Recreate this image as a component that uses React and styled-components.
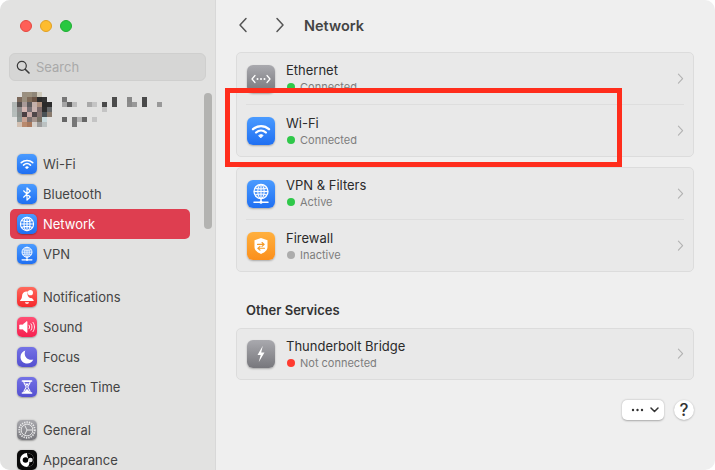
import React from 'react';
import styled, { createGlobalStyle } from 'styled-components';

const GlobalStyle = createGlobalStyle`
  html, body {
    margin: 0;
    padding: 0;
    background: #fff;
    font-family: Inter, "Liberation Sans", sans-serif;
    -webkit-font-smoothing: antialiased;
  }
`;

const BLUE = 'linear-gradient(180deg, #4a9bff 0%, #1f6ff2 100%)';
const GRAY = 'linear-gradient(180deg, #a9a9ae 0%, #77777c 100%)';
const RED = 'linear-gradient(180deg, #ff6a5c 0%, #f5282c 100%)';
const PINK = 'linear-gradient(180deg, #ff4f74 0%, #f5204f 100%)';
const PURPLE = 'linear-gradient(180deg, #7472e6 0%, #5450d0 100%)';
const ORANGE = 'linear-gradient(180deg, #ffb03e 0%, #fb8f1c 100%)';

const avatar = [
  [null, null, '#9a8f80', '#9c917f', '#8f8678', '#cfcabb', null, null],
  [null, '#7d6a5c', '#9a8f7f', '#7f6b5a', '#6b5445', '#2c2c2c', '#333', null],
  ['#b2b8b6', '#55504f', '#a89a98', '#5d5a5c', '#c4b0aa', '#ad8f7d', '#2a2a2a', '#2c2c2c'],
  ['#b4bbb9', '#8f8b8b', '#d3b6b2', '#787074', '#c9b3af', '#7d6c6c', '#2e2e2e', '#66696b'],
  ['#b6bdbb', '#8a8f8c', '#4a3f42', '#c7a9a5', '#4f4749', '#85736f', '#4a5256', '#8a7b6e'],
  [null, '#8f9794', '#c9a394', '#7f7371', '#a5948d', '#7a7468', '#c9dadd', null],
  [null, '#d2c0b2', '#b98a6e', '#a9795e', '#d5d0cb', '#9c9c9c', '#bcc2c2', null],
];

// the blurred-out account name
const nameBlocks = [
  [0, 0, 5, 5, '#777'], [0, 5, 5, 5, '#a5a5a5'], [5, 5, 5, 5, '#5f5f5f'], [10, 5, 5, 5, '#bcbcbc'],
  [25, 5, 5, 5, '#a9a9a9'], [30, 5, 5, 5, '#c4c4c4'], [40, 5, 5, 5, '#4a4a4a'], [40, 10, 5, 5, '#c4c4c4'],
  [50, 0, 5, 10, '#4c4c4c'], [65, 0, 5, 5, '#888'], [65, 5, 5, 5, '#8b8b8b'], [70, 5, 5, 5, '#999'],
  [80, 0, 5, 10, '#4a4a4a'], [95, 5, 5, 5, '#999'], [0, 20, 5, 5, '#666'], [10, 20, 5, 10, '#777'],
  [15, 20, 5, 5, '#b5b5b5'], [20, 20, 5, 5, '#666'], [30, 20, 5, 5, '#c4c4c4'],
];

const Wifi = () => (
  <svg viewBox="0 0 28 28" width="100%" height="100%" fill="none" stroke="#fff" strokeLinecap="round">
    <path d="M6 12.2c4.6-4.2 11.4-4.2 16 0" strokeWidth="2.3" />
    <path d="M9.1 15.5c2.9-2.6 6.9-2.6 9.8 0" strokeWidth="2.3" />
    <path d="M11.9 18.4c1.3-1 2.9-1 4.2 0L14 20.6z" fill="#fff" strokeWidth="1" />
  </svg>
);

const Bluetooth = () => (
  <svg viewBox="0 0 20 20" width="100%" height="100%" fill="none" stroke="#fff" strokeWidth="1.2" strokeLinejoin="round" strokeLinecap="round">
    <path d="M6.6 6.8l6.6 6.2-3.2 3.2V3.8L13.2 7l-6.6 6.2" />
  </svg>
);

const Globe = () => (
  <svg viewBox="0 0 20 20" width="100%" height="100%" fill="none" stroke="#fff" strokeWidth="1.1">
    <circle cx="10" cy="10" r="6.6" />
    <ellipse cx="10" cy="10" rx="3" ry="6.6" />
    <path d="M10 3.4v13.2M3.4 10h13.2M4.4 6.6c3.4 1.2 7.8 1.2 11.2 0M4.4 13.4c3.4-1.2 7.8-1.2 11.2 0" />
  </svg>
);

const VpnGlobe = () => (
  <svg viewBox="0 0 28 28" width="100%" height="100%" fill="none" stroke="#fff">
    <circle cx="14" cy="11.5" r="7" fill="#ffffff30" strokeWidth="1.3" />
    <ellipse cx="14" cy="11.5" rx="3.2" ry="7" strokeWidth="1" />
    <path d="M14 4.5v14M7 11.5h14M8 8c3.6 1.2 8.4 1.2 12 0M8 15c3.6-1.2 8.4-1.2 12 0" strokeWidth="1" />
    <path d="M14 18.5v3.6M7 22.2h14" strokeWidth="1.5" strokeLinecap="round" />
    <circle cx="14" cy="22.2" r="1.5" fill="#fff" stroke="none" />
  </svg>
);

const Bell = () => (
  <svg viewBox="0 0 20 20" width="100%" height="100%" fill="#fff">
    <path d="M9 4.6c-2.5.3-3.9 2.3-4 4.6-.1 1.9-.7 3-1.7 3.9-.4.4-.2 1 .4 1h12.4c.6 0 .8-.6.4-1-.7-.6-1.2-1.2-1.5-2-2 .3-4.3-1.3-4.5-3.7-.1-1 .1-1.9.6-2.7-.7-.2-1.5-.2-2.1-.1z" />
    <circle cx="13.4" cy="5.7" r="2.6" />
    <path d="M8 15.2h4c-.2 1-1 1.6-2 1.6s-1.8-.6-2-1.6z" />
  </svg>
);

const Speaker = () => (
  <svg viewBox="0 0 20 20" width="100%" height="100%" fill="none" stroke="#fff" strokeLinecap="round">
    <path d="M3 8h2.5L10 4.5v11L5.5 12H3z" fill="#fff" strokeWidth="0.8" strokeLinejoin="round" />
    <path d="M12 8.2c.8 1.1.8 2.5 0 3.6M14 6.8c1.4 2 1.4 4.4 0 6.4M16 5.4c2 2.9 2 6.3 0 9.2" strokeWidth="0.9" />
  </svg>
);

const Moon = () => (
  <svg viewBox="0 0 20 20" width="100%" height="100%" fill="#fff">
    <path d="M8.3 3.6c-3 1-4.8 3.4-4.8 6.3 0 3.7 3 6.6 6.7 6.6 2.7 0 5-1.5 6.1-4-.7.2-1.4.3-2.1.3-3.7 0-6.5-2.8-6.5-6.3 0-1 .2-1.9.6-2.9z" />
  </svg>
);

const Hourglass = () => (
  <svg viewBox="0 0 20 20" width="100%" height="100%" fill="none" stroke="#fff" strokeLinecap="round">
    <path d="M5.5 4h9M5.5 16h9" strokeWidth="1.7" />
    <path d="M6.8 4.5c0 2.8 2.3 3.8 2.3 5.5s-2.3 2.7-2.3 5.5h6.4c0-2.8-2.3-3.8-2.3-5.5s2.3-2.7 2.3-5.5z" strokeWidth="1.1" />
    <path d="M7.4 15.2c.5-1.7 2-2.3 2.6-3.4.6 1.1 2.1 1.7 2.6 3.4zM8 6.5h4L10 9z" fill="#fff" stroke="none" />
  </svg>
);

const Gear = () => (
  <svg viewBox="0 0 20 20" width="100%" height="100%" fill="none" stroke="#e9e9ea">
    <circle cx="10" cy="10" r="7.8" strokeWidth="1.8" strokeDasharray="1.3 1.1" />
    <circle cx="10" cy="10" r="5.9" strokeWidth="1" />
    <path d="M10 10L7.8 5.4M10 10h5.4M10 10l-2.2 4.6" strokeWidth="1" />
  </svg>
);

const AppearanceMark = () => (
  <svg viewBox="0 0 20 20" width="100%" height="100%">
    <circle cx="10" cy="10" r="7" fill="#fff" />
    <path d="M10 3a7 7 0 0 1 0 14c2.4-1.4 3-4.2 1.8-7C11 8 10 5 10 3z" fill="#000" />
    <circle cx="8.5" cy="10" r="2.8" fill="#000" />
    <circle cx="13.5" cy="10" r="2.2" fill="#fff" opacity="0.9" />
  </svg>
);

const Ethernet = () => (
  <svg viewBox="0 0 28 28" width="100%" height="100%" fill="none" stroke="#fff" strokeLinecap="round" strokeLinejoin="round">
    <path d="M8 10.5L5 14l3 3.5M20 10.5l3 3.5-3 3.5" strokeWidth="1.2" />
    <circle cx="10.5" cy="14" r="1" fill="#fff" stroke="none" />
    <circle cx="14" cy="14" r="1" fill="#fff" stroke="none" />
    <circle cx="17.5" cy="14" r="1" fill="#fff" stroke="none" />
  </svg>
);

const Shield = () => (
  <svg viewBox="0 0 28 28" width="100%" height="100%" fill="none">
    <path d="M14 6l6.5 2.2V15c0 3.2-2.800 5.300-6.500 7-3.700-1.700-6.500-3.800-6.500-7V8.200z" fill="#fff" />
    <path d="M10.500 12.400h6.500M15 10.500l2.200 1.900-2.200 1.900M17.500 16.300H11M13 14.400l-2.200 1.900 2.200 1.900" stroke="#f59a26" strokeWidth="1.1" strokeLinecap="round" strokeLinejoin="round" />
  </svg>
);

const Bolt = () => (
  <svg viewBox="0 0 28 28" width="100%" height="100%">
    <path d="M15.8 5.8L10.5 15h3.2l-2 7.2 5.800-9.800h-3.300l1.600-6.600z" fill="#fff" />
  </svg>
);

const Chevron = ({ size = 7, color = '#b3b3b3', left, width = 1.6 }) => (
  <svg width={size} height={size * 1.6} viewBox="0 0 10 16" fill="none" stroke={color} strokeWidth={width} strokeLinecap="round" strokeLinejoin="round">
    <path d={left ? 'M8 1.5L2 8l6 6.5' : 'M2 1.5L8 8l-6 6.5'} />
  </svg>
);

const navGroups = [
  [
    { label: 'Wi-Fi', bg: BLUE, icon: <Wifi /> },
    { label: 'Bluetooth', bg: BLUE, icon: <Bluetooth /> },
    { label: 'Network', bg: BLUE, icon: <Globe />, active: true },
    { label: 'VPN', bg: BLUE, icon: <VpnGlobe /> },
  ],
  [
    { label: 'Notifications', bg: RED, icon: <Bell /> },
    { label: 'Sound', bg: PINK, icon: <Speaker /> },
    { label: 'Focus', bg: PURPLE, icon: <Moon /> },
    { label: 'Screen Time', bg: PURPLE, icon: <Hourglass /> },
  ],
  [
    { label: 'General', bg: GRAY, icon: <Gear /> },
    { label: 'Appearance', bg: '#0a0a0a', icon: <AppearanceMark /> },
  ],
];

const cards = [
  [
    { title: 'Ethernet', status: 'Connected', dot: '#2fc84a', bg: GRAY, icon: <Ethernet /> },
    { title: 'Wi-Fi', status: 'Connected', dot: '#2fc84a', bg: BLUE, icon: <Wifi /> },
  ],
  [
    { title: 'VPN & Filters', status: 'Active', dot: '#2fc84a', bg: BLUE, icon: <VpnGlobe /> },
    { title: 'Firewall', status: 'Inactive', dot: '#acacac', bg: ORANGE, icon: <Shield /> },
  ],
];

const ServiceRow = ({ title, status, dot, bg, icon }) => (
  <Row>
    <RowIcon $bg={bg}>{icon}</RowIcon>
    <RowText>
      <RowTitle>{title}</RowTitle>
      <RowStatus>
        <Dot $color={dot} />
        {status}
      </RowStatus>
    </RowText>
    <Chevron />
  </Row>
);

const App = () => (
  <Window>
    <GlobalStyle />
    <Sidebar>
      <Traffic>
        <Light $color="#ff5f57" $edge="#e5483f" />
        <Light $color="#febc2e" $edge="#e0a024" />
        <Light $color="#28c840" $edge="#1fae33" />
      </Traffic>
      <Search>
        <svg width="14" height="14" viewBox="0 0 14 14" fill="none" stroke="#3a3a3a" strokeWidth="1.2" strokeLinecap="round">
          <circle cx="5.8" cy="5.8" r="4.5" />
          <path d="M9.2 9.2l3.8 3.8" strokeWidth="1.6" />
        </svg>
        <SearchText>Search</SearchText>
      </Search>
      <Profile>
        <svg width="40" height="35" viewBox="0 0 40 35" shapeRendering="crispEdges">
          {avatar.map((row, y) => row.map((c, x) => c && (
            <rect key={`${x}-${y}`} x={x * 5} y={y * 5} width="5" height="5" fill={c} />
          )))}
        </svg>
        <svg width="100" height="30" viewBox="0 0 100 30" shapeRendering="crispEdges">
          {nameBlocks.map(([x, y, w, h, c], i) => (
            <rect key={i} x={x} y={y} width={w} height={h} fill={c} />
          ))}
        </svg>
      </Profile>
      <Nav>
        {navGroups.map((group, i) => (
          <NavGroup key={i}>
            {group.map(item => (
              <NavRow key={item.label} $active={item.active}>
                <NavIcon $bg={item.bg}>{item.icon}</NavIcon>
                {item.label}
              </NavRow>
            ))}
          </NavGroup>
        ))}
      </Nav>
      <Scrollbar />
    </Sidebar>
    <Main>
      <Header>
        <Back>
          <Chevron size={10} color="#555" left width={1.5} />
          <Chevron size={10} color="#555" width={1.5} />
        </Back>
        <Title>Network</Title>
      </Header>
      <Cards>
        {cards.map((rows, i) => (
          <Card key={i}>
            {rows.map(row => <ServiceRow key={row.title} {...row} />)}
          </Card>
        ))}
      </Cards>
      <SectionTitle>Other Services</SectionTitle>
      <Card>
        <ServiceRow title="Thunderbolt Bridge" status="Not connected" dot="#ff3b30" bg={GRAY} icon={<Bolt />} />
      </Card>
      <Footer>
        <MoreButton>
          <svg width="13" height="4" viewBox="0 0 13 4" fill="#333">
            <circle cx="2" cy="2" r="1.2" />
            <circle cx="6.5" cy="2" r="1.2" />
            <circle cx="11" cy="2" r="1.2" />
          </svg>
          <svg width="9" height="6" viewBox="0 0 9 6" fill="none" stroke="#333" strokeWidth="1.5" strokeLinecap="round" strokeLinejoin="round">
            <path d="M1 1l3.5 3.5L8 1" />
          </svg>
        </MoreButton>
        <HelpButton>?</HelpButton>
      </Footer>
    </Main>
    <Highlight />
  </Window>
);

const Window = styled.div`
  position: relative;
  width: 715px;
  height: 470px;
  display: flex;
  overflow: hidden;
  border-radius: 10px;
  background: #efefef;
`;

const Sidebar = styled.aside`
  position: relative;
  width: 216px;
  flex: none;
  box-sizing: border-box;
  padding: 0 9px;
  background: #e2e2e1;
  border-right: 1px solid #d8d8d8;
  overflow: hidden;
`;

const Traffic = styled.div`
  display: flex;
  gap: 8px;
  padding: 20px 0 0 11px;
`;

const Light = styled.span`
  width: 12px;
  height: 12px;
  box-sizing: border-box;
  border-radius: 50%;
  background: ${p => p.$color};
  border: 0.5px solid ${p => p.$edge};
`;

const Search = styled.div`
  display: flex;
  align-items: center;
  gap: 6px;
  height: 28px;
  box-sizing: border-box;
  width: 197px;
  margin-top: 21px;
  padding-left: 6px;
  background: #d6d6d5;
  border: 1px solid #cfcfce;
  border-radius: 6px;
`;

const SearchText = styled.span`
  font-size: 13px;
  color: #a9a9a9;
`;

const Profile = styled.div`
  display: flex;
  gap: 10px;
  align-items: flex-start;
  height: 68px;
  padding: 11px 0 0 3px;
  box-sizing: border-box;
  svg:last-child { margin-top: 5px; }
`;

const Nav = styled.nav`
  display: flex;
  flex-direction: column;
  gap: 13px;
  width: 180px;
  margin-left: 1px;
`;

const NavGroup = styled.div`
  display: flex;
  flex-direction: column;
`;

const NavRow = styled.div`
  display: flex;
  align-items: center;
  gap: 6px;
  height: 30px;
  padding-left: 7px;
  border-radius: 5px;
  font-size: 13px;
  color: ${p => (p.$active ? '#fff' : '#444')};
  background: ${p => (p.$active ? '#de3e50' : 'transparent')};
`;

const NavIcon = styled.span`
  width: 20px;
  height: 20px;
  flex: none;
  border-radius: 5px;
  background: ${p => p.$bg};
  box-shadow: 0 0.5px 1.5px rgba(0, 0, 0, 0.3);
  svg { display: block; }
`;

const Scrollbar = styled.div`
  position: absolute;
  left: 204px;
  top: 93px;
  width: 8px;
  height: 136px;
  border-radius: 4px;
  background: #b3b3b1;
`;

const Main = styled.main`
  flex: 1;
  padding: 0 21px 0 20px;
`;

const Header = styled.header`
  display: flex;
  align-items: center;
  height: 50px;
  padding-bottom: 2px;
`;

const Back = styled.div`
  display: flex;
  gap: 27px;
  width: 68px;
  padding-left: 2px;
  box-sizing: border-box;
`;

const Title = styled.h1`
  margin: 0;
  font-size: 14.5px;
  font-weight: 600;
  color: #444;
`;

const Cards = styled.div`
  display: flex;
  flex-direction: column;
  gap: 10px;
`;

const Card = styled.section`
  background: #e9e9e9;
  border: 1px solid #dcdcdc;
  border-radius: 5px;
  box-sizing: border-box;
  width: 458px;
  padding: 0 9px;
`;

const Row = styled.div`
  display: flex;
  align-items: center;
  height: 51px;
  box-sizing: border-box;
  padding-left: 1px;
  & + & {
    height: 52px;
    border-top: 1px solid #dedede;
  }
  &:only-child { height: 50px; }
`;

const RowIcon = styled.span`
  width: 28px;
  height: 28px;
  flex: none;
  border-radius: 6px;
  background: ${p => p.$bg};
  box-shadow: 0 1px 2px rgba(0, 0, 0, 0.28);
  svg { display: block; }
  ${Row} + ${Row} & { margin-top: 1px; }
`;

const RowText = styled.div`
  flex: 1;
  margin-left: 11px;
  ${Row}:only-child &, ${Row} + ${Row} & { padding-top: 2px; }
`;

const RowTitle = styled.div`
  font-size: 13px;
  line-height: 17px;
  color: #2b2b2b;
  margin-top: -1px;
`;

const RowStatus = styled.div`
  display: flex;
  align-items: center;
  gap: 5px;
  padding-left: 1px;
  font-size: 11px;
  line-height: 16px;
  color: #7d7d7d;
`;

const Dot = styled.span`
  width: 8px;
  height: 8px;
  border-radius: 50%;
  background: ${p => p.$color};
`;

const SectionTitle = styled.h2`
  margin: 0;
  padding: 30px 0 9px 10px;
  font-size: 13px;
  line-height: 17px;
  font-weight: 600;
  color: #333;
`;

const Footer = styled.footer`
  display: flex;
  justify-content: flex-end;
  align-items: center;
  gap: 10px;
  margin-top: 20px;
`;

const MoreButton = styled.div`
  display: flex;
  align-items: center;
  gap: 6px;
  width: 42px;
  height: 20px;
  box-sizing: border-box;
  padding-left: 9px;
  background: #fff;
  border-radius: 5px;
  box-shadow: 0 0.5px 2px rgba(0, 0, 0, 0.3);
`;

const HelpButton = styled.div`
  width: 20px;
  height: 20px;
  border-radius: 50%;
  background: #fff;
  box-shadow: 0 0.5px 2px rgba(0, 0, 0, 0.3);
  font-size: 17px;
  font-weight: 500;
  line-height: 20px;
  text-align: center;
  color: #333;
`;

const Highlight = styled.div`
  position: absolute;
  left: 225px;
  top: 88px;
  width: 397px;
  height: 79px;
  box-sizing: border-box;
  border: 5px solid #ff2d1c;
  pointer-events: none;
`;

export default App;
